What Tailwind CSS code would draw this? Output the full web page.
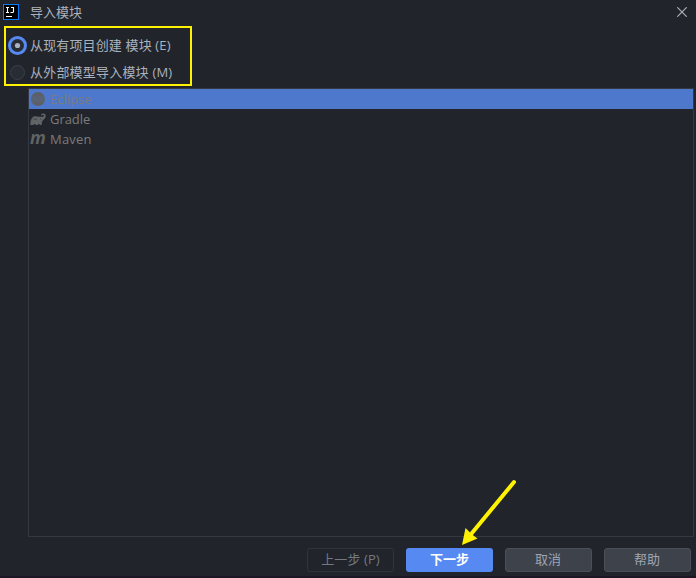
<!DOCTYPE html>
<html lang="zh-CN">
<head>
<meta charset="utf-8">
<title>导入模块</title>
<script src="https://cdn.jsdelivr.net/npm/@tailwindcss/browser@4"></script>
</head>
<body class="bg-[#21252b]">
<div class="relative flex h-[578px] w-[696px] flex-col overflow-hidden border-b-2 border-[#1d1725] bg-[#21252b] font-['Open_Sans','Noto_Sans_CJK_SC',sans-serif] text-[13px] leading-5 text-[#abb2bf]">
  <header class="flex h-6 shrink-0 items-center pl-[3px] pr-[9px]">
    <svg class="size-4" viewBox="0 0 16 16" fill="none">
      <rect x=".5" y=".5" width="15" height="15" fill="#000" stroke="#087cfa"/>
      <path d="M3 3.500h3M4.500 3.500v5M3 8.500h3M8 3.500h2.500V7.500q0 1-1 1H7.500M3 12.500h6" stroke="#fff" stroke-width="1.100"/>
    </svg>
    <h1 class="ml-[11px] grow">导入模块</h1>
    <svg class="size-[10px]" viewBox="0 0 10 10" fill="none"><path d="M.3.3l9.400 9.400M9.700.3L.3 9.700" stroke="#b4b5b7" stroke-width="1.100"/></svg>
  </header>

  <div class="flex h-16 shrink-0 flex-col pl-2 pt-2">
    <label class="flex h-[27px] items-center">
      <svg class="size-[19px]" viewBox="0 0 19 19"><circle cx="9.500" cy="9.500" r="8" fill="#282c34" stroke="#568af2" stroke-width="3"/><circle cx="9.500" cy="9.500" r="2.600" fill="#abb2bf"/></svg>
      <span class="ml-[3px] pb-[2px] tracking-[0.14px]">从现有项目创建 模块 (E)</span>
    </label>
    <label class="flex h-[27px] items-center">
      <svg class="size-[19px]" viewBox="0 0 19 19"><circle cx="9.500" cy="9.500" r="7" fill="#282c34" stroke="#3b3f49"/></svg>
      <span class="ml-[3px] pb-[2px] tracking-[0.2px]">从外部模型导入模块 (M)</span>
    </label>
  </div>

  <ul class="ml-7 mr-[2px] h-[449px] shrink-0 border border-[#333841] leading-5 text-[#7b7b7b]">
    <li class="flex h-5 items-center bg-[#4d78cc]">
      <svg class="ml-[1px] size-4" viewBox="0 0 16 16"><circle cx="8" cy="8" r="7" fill="#5c6066"/><path d="M1.500 6h13M1 8h14M1.500 10h13" stroke="#526c9d" stroke-width=".5"/></svg>
      <span class="ml-1">Eclipse</span>
    </li>
    <li class="flex h-5 items-center">
      <svg class="ml-[1px] size-4" viewBox="0 0 16 16"><path fill="#626365" d="M.4 14C.2 10.500 1 7.300 3.200 5.700C5 4.500 7.500 6 9.700 5.800C11 5.600 13.200 6.200 13.800 5C14.200 4 13 3.400 11.600 4.400L10.900 3.500C12.200 2 15.500 2 15.700 4.700C15.900 7.300 13.600 8.300 12.600 9.700C11.900 10.900 11.700 12.400 11.600 14H9.900C9.700 12.500 7.900 12.500 7.700 14H5.800C5.500 12.500 3.700 12.500 3.400 14Z"/><path d="M3 7.200q1.500 2.700 4 .7M10 7.800l1.400.8" fill="none" stroke="#21252b" stroke-width=".5"/></svg>
      <span class="ml-1 tracking-[-0.05px]">Gradle</span>
    </li>
    <li class="flex h-5 items-center">
      <svg class="ml-[1px] size-4 overflow-visible" viewBox="0 0 16 16"><text x="0" y="13" textLength="15.800" lengthAdjust="spacingAndGlyphs" fill="#626365" class="font-['Open_Sans',sans-serif] text-[18px] font-bold italic">m</text></svg>
      <span class="ml-1 tracking-[0.2px]">Maven</span>
    </li>
  </ul>

  <footer class="flex grow items-start justify-end pr-[5px] pt-[11px] leading-none">
    <button class="mr-3 h-6 w-[87px] rounded-[3px] border border-[#30343c] pb-px tracking-[0.1px] text-[#747980]">上一步 (P)</button>
    <button class="mr-3 h-6 w-[87px] rounded-[3px] bg-[#568af2] pb-px font-bold text-white">下一步</button>
    <button class="mr-3 h-6 w-[87px] rounded-[3px] border border-[#4a4f58] bg-[#3d424b] pb-px pr-px text-[#9da5b4]">取消</button>
    <button class="h-6 w-[87px] rounded-[3px] border border-[#4a4f58] bg-[#3d424b] pb-px pr-px text-[#9da5b4]">帮助</button>
  </footer>

  <div class="absolute left-1 top-[26px] h-[60px] w-[188px] border-2 border-[#fff200]"></div>
  <svg class="absolute left-[455px] top-[475px] h-[75px] w-[65px]" viewBox="0 0 65 75"><path d="M59 7L17 58" stroke="#fff200" stroke-width="4" stroke-linecap="round"/><path d="M7 70L10.500 53L14.500 57L19 61L22.500 63.500Z" fill="#fff200"/></svg>
</div>
</body>
</html>
